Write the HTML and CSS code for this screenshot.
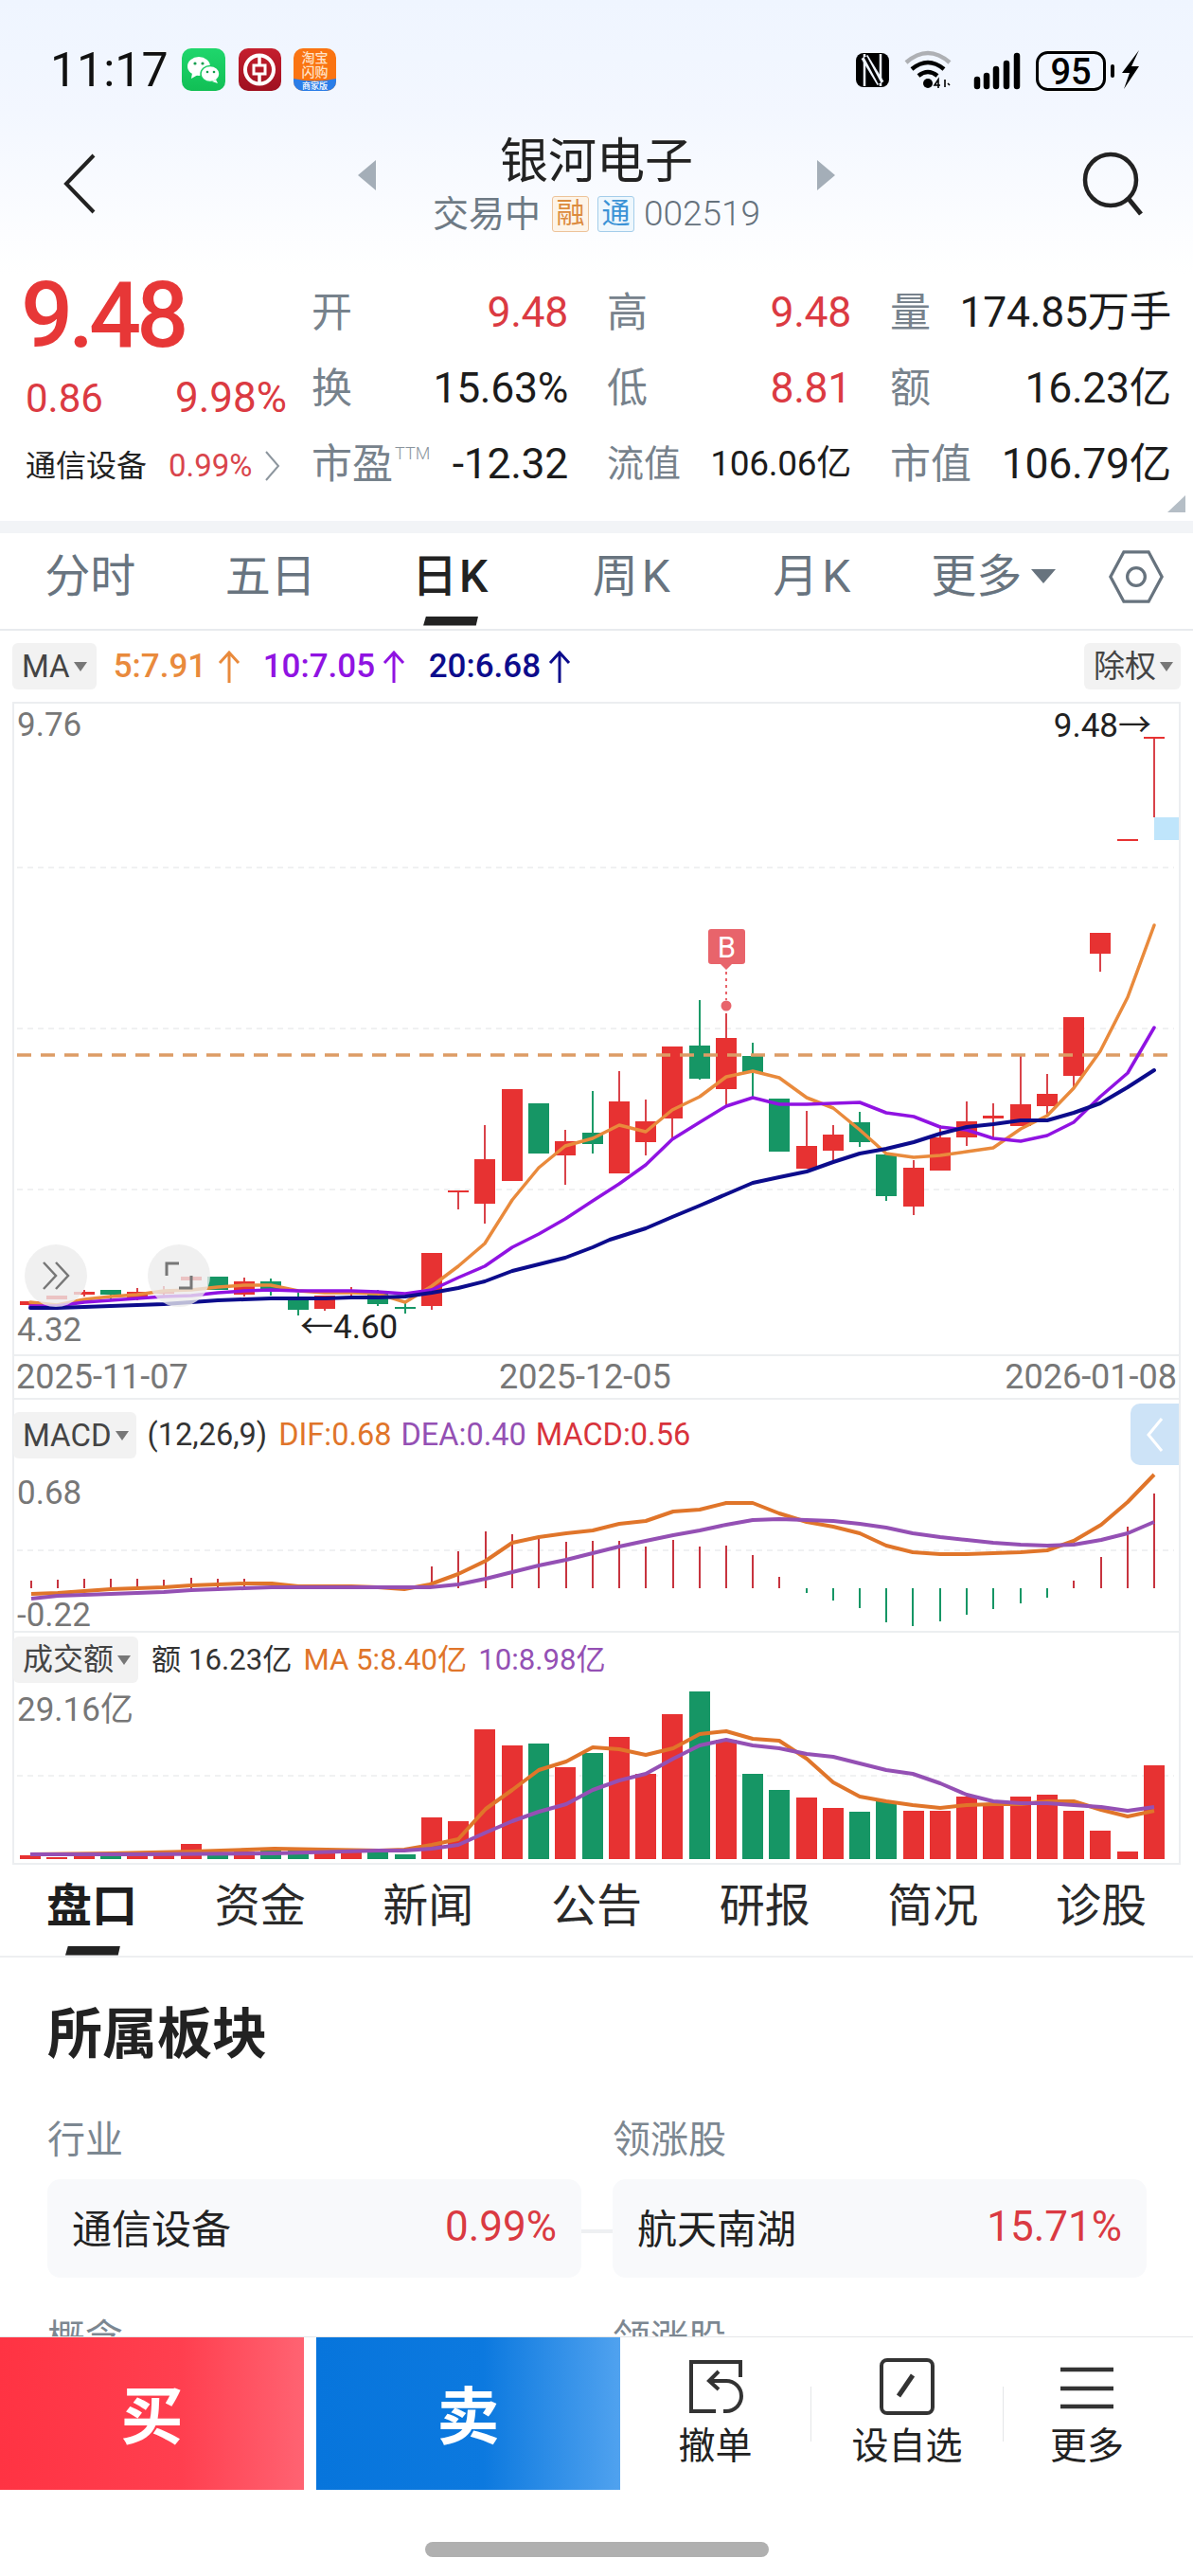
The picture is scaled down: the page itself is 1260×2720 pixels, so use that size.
FILE: index.html
```html
<!DOCTYPE html>
<html lang="zh">
<head>
<meta charset="utf-8">
<title>银河电子</title>
<link rel="stylesheet" href="styles.css">
</head>
<body>
<div class="page">
  <header class="status">
    <div class="status-left">
      <span class="time">11:17</span>
      <svg class="app-icons" viewBox="192 50 164 47" width="164" height="47">
        <defs>
          <linearGradient id="wx" x1="0" y1="0" x2="0" y2="1"><stop offset="0" stop-color="#1fd66c"/><stop offset="1" stop-color="#11bf55"/></linearGradient>
          <linearGradient id="bk" x1="0" y1="0" x2="0" y2="1"><stop offset="0" stop-color="#c51f2e"/><stop offset="1" stop-color="#9f1020"/></linearGradient>
        </defs>
        <rect x="192" y="51" width="46" height="45" rx="10" fill="url(#wx)"/>
        <ellipse cx="210" cy="70" rx="12" ry="10" fill="#fff"/>
        <path d="M203 77l-1 6 7-4z" fill="#fff"/>
        <ellipse cx="222" cy="78" rx="10" ry="8.500" fill="#fff" stroke="#17cb60" stroke-width="1.500"/>
        <path d="M228 84l2 4-6-2z" fill="#fff"/>
        <circle cx="206" cy="67" r="1.600" fill="#17a050"/><circle cx="214" cy="67" r="1.600" fill="#17a050"/>
        <circle cx="219" cy="76" r="1.300" fill="#17a050"/><circle cx="226" cy="76" r="1.300" fill="#17a050"/>
        <rect x="252" y="51" width="45" height="45" rx="10" fill="url(#bk)"/>
        <circle cx="274" cy="73.500" r="15" fill="none" stroke="#fff" stroke-width="4"/>
        <rect x="268" y="69" width="12" height="9" fill="none" stroke="#fff" stroke-width="3"/>
        <path d="M274 59v10M274 78v10" stroke="#fff" stroke-width="3.500"/>
        <rect x="310" y="51" width="45" height="45" rx="10" fill="#fa7412"/>
        <path d="M310 83q22 5 45 0v3a10 10 0 0 1-10 10h-25a10 10 0 0 1-10-10z" fill="#2a7de8"/>
        <text x="332.500" y="66" class="ti-text">淘宝</text>
        <text x="332.500" y="81" class="ti-text">闪购</text>
        <text x="332.500" y="94" class="ti-small">商家版</text>
      </svg>
    </div>
    <svg class="status-right" viewBox="905 52 302 44" width="302" height="44">
      <rect x="906" y="56" width="35" height="36" rx="8" fill="#000"/>
      <path d="M915 57v34M932 57v34" stroke="#eff5ff" stroke-width="2.500"/>
      <path d="M915 60l17 28" stroke="#eff5ff" stroke-width="8"/>
      <path d="M916 60l15 28" stroke="#000" stroke-width="3"/>
      <path d="M959 66q23-20 46 0" fill="none" stroke="#aeb0b4" stroke-width="4.500"/>
      <path d="M965 73q17-14 34 0" fill="none" stroke="#000" stroke-width="4.500"/>
      <path d="M972 80q10-8 20 0" fill="none" stroke="#000" stroke-width="4.500"/>
      <circle cx="982" cy="88" r="5" fill="#000"/>
      <path d="M993 93v-9l-4 6h6M1000 84v8M1003 88l2 2" fill="none" stroke="#000" stroke-width="1.600"/>
      <g class="signal">
        <path d="M1034 91v-7M1044 91v-11M1054 91v-18M1065 91v-24M1076 91v-32"/>
      </g>
      <rect x="1097.500" y="55.500" width="71" height="39" rx="11" fill="none" stroke="#000" stroke-width="3"/>
      <text x="1133" y="88.500" class="bat-text">95</text>
      <rect x="1175" y="68" width="4" height="14" rx="2" fill="#000"/>
      <path d="M1205 53l-18 24h8l-6 17 16-24h-8z" fill="#000"/>
    </svg>
  </header>

  <section class="head">
    <svg class="back" viewBox="0 0 40 66" width="40" height="66"><path d="M34 3L5 33l29 30" fill="none" stroke="#222" stroke-width="4"/></svg>
    <div class="head-center">
      <div class="title-row">
        <i class="tri tri-l"></i>
        <h1 class="title">银河电子</h1>
        <i class="tri tri-r"></i>
      </div>
      <div class="sub-row">
        <span class="sub-text">交易中</span>
        <span class="tag tag-o">融</span>
        <span class="tag tag-b">通</span>
        <span class="code">002519</span>
      </div>
    </div>
    <svg class="search" viewBox="0 0 66 68" width="66" height="68"><circle cx="31" cy="30" r="27" fill="none" stroke="#222" stroke-width="4.500"/><path d="M50 50l13 16" stroke="#222" stroke-width="5"/></svg>
  </section>

  <section class="quote">
    <div class="q-left">
      <div class="price">9.48</div>
      <div class="chg"><span>0.86</span><span class="chg-pct">9.98%</span></div>
      <div class="sector"><span class="sector-name">通信设备</span><span class="sector-pct">0.99%</span>
        <svg class="sector-arrow" viewBox="0 0 18 34" width="18" height="34"><path d="M2 2l13 15L2 32" fill="none" stroke="#8d969e" stroke-width="2"/></svg>
      </div>
    </div>
    <div class="q-grid">
      <div class="cell"><span class="lb">开</span><span class="val red">9.48</span></div>
      <div class="cell"><span class="lb">高</span><span class="val red">9.48</span></div>
      <div class="cell"><span class="lb">量</span><span class="val">174.85万手</span></div>
      <div class="cell"><span class="lb">换</span><span class="val">15.63%</span></div>
      <div class="cell"><span class="lb">低</span><span class="val red">8.81</span></div>
      <div class="cell"><span class="lb">额</span><span class="val">16.23亿</span></div>
      <div class="cell"><span class="lb">市盈<sup class="ttm">TTM</sup></span><span class="val">-12.32</span></div>
      <div class="cell"><span class="lb lb-s">流值</span><span class="val val-s">106.06亿</span></div>
      <div class="cell"><span class="lb">市值</span><span class="val">106.79亿</span></div>
    </div>
    <i class="corner"></i>
  </section>

  <nav class="tabs">
    <span class="tab">分时</span>
    <span class="tab">五日</span>
    <span class="tab tab-on">日K</span>
    <span class="tab tab-k">周K</span>
    <span class="tab tab-k">月K</span>
    <span class="tab tab-more">更多<i class="tab-caret"></i></span>
    <svg class="hex" viewBox="0 0 62 62" width="58" height="58"><path d="M2 31L17 3h28l15 28-15 28H17z" fill="none" stroke="#67737e" stroke-width="3.500"/><circle cx="31" cy="31" r="10" fill="none" stroke="#67737e" stroke-width="3.500"/></svg>
  </nav>

  <div class="ma-row">
    <span class="chip">MA<i class="caret"></i></span>
    <span class="ma-v c-5">5:7.91<svg class="arr" viewBox="0 0 24 34" width="24" height="34"><path d="M12 34V2M2 13L12 2l10 11" fill="none" stroke="currentColor" stroke-width="3"/></svg></span>
    <span class="ma-v c-10">10:7.05<svg class="arr arr-t" viewBox="0 0 24 34" width="24" height="34"><path d="M12 34V2M2 13L12 2l10 11" fill="none" stroke="currentColor" stroke-width="3"/></svg></span>
    <span class="ma-v c-20">20:6.68<svg class="arr arr-t" viewBox="0 0 24 34" width="24" height="34"><path d="M12 34V2M2 13L12 2l10 11" fill="none" stroke="currentColor" stroke-width="3"/></svg></span>
    <span class="chip chip-r">除权<i class="caret"></i></span>
  </div>

  <div class="charts">
    <div class="panel panel-main">
      <svg class="plot" viewBox="15 743 1230 687" width="1230" height="687">
        <path class="grid" d="M18 916H1240M18 1086H1240M18 1256H1240"/>
        <rect x="1219" y="863" width="26" height="24" fill="#bfe5fb"/>
        <path class="wick-r" d="M89 1362V1369M145 1360V1373M173 1358V1368M202 1348V1360M258 1349V1369M343 1382V1384M371 1359V1368M456 1379V1383M484 1258V1277M512 1188V1292M597 1193V1251M654 1131V1163M682 1161V1220M710 1181V1202M767 1070V1168M852 1173V1210M880 1188V1225M965 1225V1283M993 1188V1201M1021 1163V1210M1049 1165V1202M1078 1115V1166M1106 1134V1177M1134 1136V1148M1162 1007V1026M1219 779V863"/>
        <path class="wick-g" d="M117 1367V1373M286 1350V1368M315 1365V1389M399 1362V1379M428 1375V1387M626 1152V1218M739 1056V1140M795 1101V1158M908 1174V1211M936 1263V1268"/>
        <path class="fill-r" d="M21 1374h22v4h-22zM49 1368h22v4h-22zM78 1364h22v3h-22zM134 1364h22v7h-22zM162 1364h22v2h-22zM191 1348h22v4h-22zM247 1353h22v14h-22zM332 1368h22v14h-22zM360 1364h22v2h-22zM445 1323h22v56h-22zM473 1257h22v2h-22zM501 1224h22v47h-22zM530 1150h22v97h-22zM586 1205h22v15h-22zM643 1163h22v76h-22zM671 1184h22v22h-22zM699 1105h22v76h-22zM756 1096h22v54h-22zM841 1210h22v24h-22zM869 1198h22v17h-22zM954 1233h22v41h-22zM982 1201h22v35h-22zM1010 1184h22v17h-22zM1038 1178h22v3h-22zM1067 1166h22v23h-22zM1095 1155h22v13h-22zM1123 1074h22v62h-22zM1151 985h22v22h-22zM1180 886h22v2h-22zM1208 778h22v2h-22z"/>
        <path class="fill-g" d="M106 1362h22v5h-22zM219 1348h22v14h-22zM275 1353h22v9h-22zM304 1369h22v14h-22zM388 1364h22v13h-22zM417 1380h22v2h-22zM558 1165h22v53h-22zM615 1196h22v12h-22zM728 1104h22v35h-22zM784 1115h22v18h-22zM812 1160h22v56h-22zM897 1185h22v21h-22zM925 1219h22v44h-22z"/>
        <path class="dash" d="M18 1114H1242"/>
        <polyline class="ln l5" points="32,1375 60,1378 89,1372 117,1369 145,1367 173,1363 202,1362 230,1359 258,1357 286,1357 315,1363 343,1365 371,1365 399,1366 428,1375 456,1358 484,1337 512,1313 541,1267 569,1233 597,1210 626,1202 654,1188 682,1195 710,1172 739,1158 767,1137 795,1131 823,1138 852,1159 880,1170 908,1193 936,1218 965,1222 993,1220 1021,1216 1049,1212 1078,1192 1106,1178 1134,1149 1162,1110 1191,1053 1219,977"/>
        <polyline class="ln l10" points="32,1379 60,1379 89,1375 117,1373 145,1371 173,1369 202,1368 230,1365 258,1363 286,1362 315,1363 343,1363 371,1363 399,1364 428,1366 456,1362 484,1349 512,1337 541,1317 569,1303 597,1287 626,1268 654,1250 682,1230 710,1203 739,1185 767,1168 795,1159 823,1166 852,1166 880,1165 908,1164 936,1175 965,1179 993,1190 1021,1193 1049,1202 1078,1205 1106,1199 1134,1185 1162,1158 1191,1133 1219,1085"/>
        <polyline class="ln l20" points="32,1381 60,1381 89,1380 117,1379 145,1378 173,1377 202,1375 230,1373 258,1372 286,1371 315,1371 343,1371 371,1370 399,1370 428,1369 456,1365 484,1360 512,1353 541,1342 569,1335 597,1328 626,1317 644,1309 682,1297 710,1285 739,1273 767,1261 795,1249 823,1243 852,1237 880,1227 908,1218 936,1213 965,1206 993,1197 1021,1190 1049,1187 1078,1183 1106,1183 1134,1175 1162,1165 1191,1148 1219,1130"/>
        <path d="M748 984a3 3 0 0 1 3-3h33a3 3 0 0 1 3 3v31a3 3 0 0 1-3 3h-11l-6 6-6-6h-10a3 3 0 0 1-3-3z" fill="#e8646b"/>
        <text x="767.500" y="1011" class="b-text">B</text>
        <path d="M767 1026V1056" stroke="#e8646b" stroke-width="2" stroke-dasharray="3 4"/>
        <circle cx="767" cy="1062" r="5.500" fill="#e8646b"/>
      </svg>
      <span class="axis ax-top">9.76</span>
      <span class="axis ax-bot">4.32</span>
      <span class="mark mark-hi">9.48→</span>
      <span class="mark mark-lo">←4.60</span>
      <span class="float-btn fb-1"><svg viewBox="0 0 30 32" width="30" height="32"><path d="M2 2l13 14L2 30M15 2l13 14-13 14" fill="none" stroke="#777" stroke-width="2.500"/></svg></span>
      <span class="float-btn fb-2"><svg viewBox="0 0 30 30" width="30" height="30"><path d="M2 15V2h13M28 15v13H15" fill="none" stroke="#777" stroke-width="3"/></svg></span>
    </div>
    <div class="dates"><span>2025-11-07</span><span class="date-mid">2025-12-05</span><span>2026-01-08</span></div>
    <div class="panel panel-macd">
      <svg class="plot" viewBox="15 1478 1230 244" width="1230" height="244">
        <path class="grid" d="M18 1637H1240"/>
        <path class="hist-r" d="M33 1669V1677M61 1668V1677M89 1667V1677M117 1667V1677M145 1667V1677M173 1668V1677M202 1666V1677M230 1667V1677M258 1667V1677M287 1671V1677M456 1654V1677M484 1638V1677M513 1617V1677M541 1620V1677M569 1623V1677M598 1628V1677M626 1627V1677M654 1627V1677M682 1633V1677M711 1626V1677M739 1633V1677M767 1632V1677M795 1642V1677M823 1665V1677M1134 1669V1677M1163 1644V1677M1191 1612V1677M1219 1577V1677"/>
        <path class="hist-g" d="M852 1677V1682M880 1677V1690M908 1677V1698M936 1677V1713M964 1677V1717M993 1677V1712M1021 1677V1705M1049 1677V1699M1078 1677V1693M1106 1677V1687"/>
        <polyline class="ln2 dif" points="33,1683 61,1682 89,1680 117,1678 145,1677 173,1676 202,1674 230,1673 258,1672 287,1672 315,1675 343,1675 371,1675 399,1676 427,1678 454,1673 484,1662 513,1648 541,1629 569,1623 598,1619 626,1616 654,1609 682,1606 711,1596 739,1594 767,1587 795,1587 823,1598 852,1607 880,1612 908,1619 936,1632 964,1639 993,1641 1021,1641 1049,1640 1078,1639 1106,1637 1134,1627 1163,1610 1191,1586 1219,1557"/>
        <polyline class="ln2 dea" points="33,1688 61,1685 89,1684 117,1683 145,1682 173,1681 202,1679 230,1678 258,1677 287,1676 315,1676 343,1676 371,1676 399,1676 427,1676 454,1676 484,1673 513,1667 541,1660 569,1653 598,1647 626,1640 654,1633 682,1627 711,1621 739,1616 767,1610 795,1605 823,1604 852,1605 880,1606 908,1609 936,1613 964,1619 993,1623 1021,1626 1049,1629 1078,1631 1106,1632 1134,1631 1163,1626 1191,1619 1219,1607"/>
      </svg>
      <div class="legend">
        <span class="chip">MACD<i class="caret"></i></span>
        <span class="lg-dark">(12,26,9)</span>
        <span class="lg-o">DIF:0.68</span>
        <span class="lg-p">DEA:0.40</span>
        <span class="lg-r">MACD:0.56</span>
      </div>
      <span class="axis ax-m1">0.68</span>
      <span class="axis ax-m2">-0.22</span>
      <span class="side-tab"><svg viewBox="0 0 20 38" width="20" height="38"><path d="M17 2L3 19l14 17" fill="none" stroke="#fff" stroke-width="3"/></svg></span>
    </div>
    <div class="panel panel-vol">
      <svg class="plot" viewBox="15 1724 1230 243" width="1230" height="243">
        <path class="grid" d="M18 1875H1240"/>
        <path class="fill-r" d="M21 1959h22V1963h-22zM49 1961h22V1963h-22zM78 1957h22V1963h-22zM134 1957h22V1963h-22zM162 1957h22V1963h-22zM191 1947h22V1963h-22zM247 1955h22V1963h-22zM332 1953h22V1963h-22zM360 1955h22V1963h-22zM445 1919h22V1963h-22zM473 1923h22V1963h-22zM501 1826h22V1963h-22zM530 1843h22V1963h-22zM586 1866h22V1963h-22zM643 1834h22V1963h-22zM671 1873h22V1963h-22zM699 1810h22V1963h-22zM756 1837h22V1963h-22zM841 1898h22V1963h-22zM869 1909h22V1963h-22zM954 1912h22V1963h-22zM982 1912h22V1963h-22zM1010 1897h22V1963h-22zM1038 1907h22V1963h-22zM1067 1897h22V1963h-22zM1095 1895h22V1963h-22zM1123 1912h22V1963h-22zM1151 1933h22V1963h-22zM1180 1955h22V1963h-22zM1208 1864h22V1963h-22z"/>
        <path class="fill-g" d="M106 1958h22V1963h-22zM219 1957h22V1963h-22zM275 1954h22V1963h-22zM304 1954h22V1963h-22zM388 1955h22V1963h-22zM417 1958h22V1963h-22zM558 1841h22V1963h-22zM615 1851h22V1963h-22zM728 1786h22V1963h-22zM784 1873h22V1963h-22zM812 1890h22V1963h-22zM897 1913h22V1963h-22zM925 1902h22V1963h-22z"/>
        <polyline class="ln2 dif" points="32,1958 117,1957 202,1955 290,1952 400,1954 427,1953 456,1948 484,1942 513,1910 541,1890 569,1869 598,1860 626,1845 654,1847 682,1853 711,1846 739,1831 767,1828 795,1836 823,1838 852,1857 880,1882 908,1897 936,1902 964,1906 993,1909 1021,1906 1049,1905 1078,1905 1106,1902 1134,1902 1163,1911 1191,1918 1219,1912"/>
        <polyline class="ln2 dea" points="32,1958 145,1958 290,1957 399,1954 427,1954 456,1952 484,1948 513,1935 541,1923 569,1913 598,1905 626,1890 654,1880 682,1873 711,1857 739,1843 767,1837 795,1843 823,1846 852,1852 880,1855 908,1862 936,1869 964,1873 993,1883 1021,1895 1049,1902 1078,1904 1106,1904 1134,1906 1163,1908 1191,1912 1219,1908"/>
      </svg>
      <div class="legend legend-vol">
        <span class="chip">成交额<i class="caret"></i></span>
        <span class="lg-dark">额 16.23亿</span>
        <span class="lg-o">MA 5:8.40亿</span>
        <span class="lg-p">10:8.98亿</span>
      </div>
      <span class="axis ax-v">29.16亿</span>
    </div>
  </div>

  <nav class="subtabs">
    <span class="subtab subtab-on">盘口</span>
    <span class="subtab">资金</span>
    <span class="subtab">新闻</span>
    <span class="subtab">公告</span>
    <span class="subtab">研报</span>
    <span class="subtab">简况</span>
    <span class="subtab">诊股</span>
  </nav>

  <main class="main">
    <h2 class="sec-title">所属板块</h2>
    <div class="sec-row">
      <div class="sec-col"><div class="sec-label">行业</div><div class="card"><span>通信设备</span><span class="pct">0.99%</span></div></div>
      <i class="bridge"></i>
      <div class="sec-col"><div class="sec-label">领涨股</div><div class="card"><span>航天南湖</span><span class="pct">15.71%</span></div></div>
    </div>
    <div class="sec-row sec-next">
      <div class="sec-col"><div class="sec-label">概念</div></div>
      <i class="bridge bridge-none"></i>
      <div class="sec-col"><div class="sec-label">领涨股</div></div>
    </div>
  </main>

  <footer class="footer">
    <div class="foot-row">
      <button class="trade buy">买</button>
      <button class="trade sell">卖</button>
      <div class="tool tool-1">
        <svg viewBox="0 0 60 60" width="60" height="60"><path d="M56 20V4H4v52h26" fill="none" stroke="#333" stroke-width="4"/><path d="M33 14L23 24l10 9" fill="none" stroke="#333" stroke-width="4"/><path d="M24 24h17a15.500 15.500 0 0 1 0 32h-3" fill="none" stroke="#333" stroke-width="4"/></svg>
        <span>撤单</span>
      </div>
      <i class="tool-sep"></i>
      <div class="tool tool-2">
        <svg viewBox="0 0 60 60" width="60" height="60"><rect x="3" y="2" width="54" height="56" rx="6" fill="none" stroke="#333" stroke-width="4"/><path d="M21 40l15-22" fill="none" stroke="#333" stroke-width="5"/></svg>
        <span>设自选</span>
      </div>
      <i class="tool-sep"></i>
      <div class="tool tool-3">
        <svg viewBox="0 0 60 60" width="60" height="60"><path d="M2 12h56M2 32h56M2 51h56" stroke="#333" stroke-width="4.500"/></svg>
        <span>更多</span>
      </div>
    </div>
    <i class="home-bar"></i>
  </footer>
</div>
</body>
</html>
```
FILE: styles.css
```css
* { box-sizing: border-box; }
html, body { margin: 0; padding: 0; }
body {
  width: 1260px;
  height: 2720px;
  overflow: hidden;
  background: #fff;
  font-family: Roboto, "Noto Sans CJK SC", sans-serif;
  color: #222;
}
i { font-style: normal; display: block; }
.page {
  width: 1260px;
  height: 2720px;
  background: linear-gradient(#eff5ff 0, #f3f7ff 120px, #fff 290px) no-repeat;
  background-size: 100% 300px;
}

/* status bar */
.status {
  height: 112px;
  padding: 35px 55px 0 53px;
  display: flex;
  align-items: center;
  justify-content: space-between;
}
.status-left { display: flex; align-items: center; gap: 11px; }
.time { font-size: 50px; font-weight: 400; color: #111; width: 128px; line-height: 50px; }
.app-icons, .status-right { display: block; }
.ti-text { font: 500 14px "Noto Sans CJK SC", sans-serif; fill: #ffe3c8; text-anchor: middle; }
.ti-small { font: 500 9px "Noto Sans CJK SC", sans-serif; fill: #fff; text-anchor: middle; }
.signal path { stroke: #000; stroke-width: 6.500; stroke-linecap: round; fill: none; }
.bat-text { font: 500 38px Roboto, sans-serif; fill: #000; text-anchor: middle; }

/* header */
.head {
  height: 150px;
  padding: 0 52px;
  display: grid;
  grid-template-columns: 1fr auto 1fr;
  align-items: start;
}
.back { margin: 49px 0 0 13px; display: block; }
.search { margin-top: 48px; justify-self: end; display: block; }
.head-center { padding-top: 28px; display: flex; flex-direction: column; align-items: center; }
.title-row { display: flex; align-items: flex-start; gap: 131px; height: 66px; }
.title { margin: 0; font-size: 51px; font-weight: 400; line-height: 62px; color: #222; width: 204px; text-align: center; white-space: nowrap; }
.tri { width: 0; height: 0; margin-top: 29px; border-top: 16px solid transparent; border-bottom: 16px solid transparent; }
.tri-l { border-right: 19px solid #a4aeb8; }
.tri-r { border-left: 19px solid #a4aeb8; }
.sub-row { display: flex; align-items: center; height: 40px; }
.sub-text { font-size: 38px; line-height: 40px; color: #6e7a85; width: 114px; }
.tag { width: 39px; height: 38px; margin-left: 12px; border: 1.500px solid; border-radius: 3px; font-size: 30px; line-height: 34px; text-align: center; display: block; }
.tag + .tag { margin-left: 9px; }
.tag-o { color: #dc8b3e; border-color: #edc39a; background: #fdf4e8; }
.tag-b { color: #3b93d6; border-color: #a4cdea; background: #eef7fd; }
.code { margin-left: 10px; font-size: 37px; font-weight: 300; line-height: 40px; color: #66727d; }

/* quote */
.quote { position: relative; height: 288px; padding: 28px 0 19px 27px; display: flex; }
.q-left { width: 276px; margin-right: 27px; }
.price { font-size: 97px; font-weight: 500; color: #e73737; line-height: 86px; height: 86px; letter-spacing: -5px; margin-left: -5px; }
.chg { margin-top: 14px; display: flex; justify-content: space-between; align-items: baseline; font-size: 42px; line-height: 60px; color: #db3a42; font-weight: 400; white-space: nowrap; }
.chg-pct { font-size: 44px; }
.sector { margin-top: 11px; display: flex; align-items: center; line-height: 60px; height: 60px; white-space: nowrap; }
.sector-name { font-size: 32px; color: #222; width: 151px; }
.sector-pct { font-size: 33px; color: #d9454c; width: 101px; font-weight: 400; }
.sector-arrow { display: block; }
.q-grid { display: grid; grid-template-columns: 270px 257px 296px; grid-auto-rows: 80px; column-gap: 42px; }
.cell { display: flex; justify-content: space-between; align-items: center; white-space: nowrap; }
.lb { font-size: 43px; color: #77828c; font-weight: 400; line-height: 60px; margin-left: -1px; }
.lb-s { font-size: 39px; }
.val { font-size: 44.500px; font-weight: 400; color: #1c1c1c; line-height: 60px; letter-spacing: -.3px; }
.val-s { font-size: 37px; }
.red { color: #db3a42; }
.ttm { font-size: 18px; font-weight: 300; color: #8a949d; vertical-align: 20px; line-height: 0; margin-left: 2px; }
.corner { position: absolute; right: 8px; top: 261px; width: 0; height: 0; border-left: 19px solid transparent; border-bottom: 18px solid #b5bec6; }

/* tabs */
.tabs {
  margin-top: 13px;
  height: 103px;
  padding-bottom: 10px;
  display: grid;
  grid-template-columns: repeat(6, 190.500px) 117px;
  align-items: center;
  justify-items: center;
  border-bottom: 2px solid #e8ebee;
  background: #fff;
  position: relative;
  box-shadow: 0 -13px 0 #f2f4f7;
}
.tab { font-size: 48px; color: #68747f; position: relative; line-height: 60px; display: flex; align-items: center; white-space: nowrap; font-weight: 400; }
.tab-on { color: #222; font-weight: 500; letter-spacing: 2px; }
.tab-on::after { content: ""; position: absolute; left: 12px; top: 72px; width: 58px; height: 10px; background: #222; clip-path: polygon(5% 0, 100% 0, 96% 100%, 0 100%); }
.tab-k { letter-spacing: 4px; margin-left: 4px; }
.tab-more { margin-left: 3px; }
.tab-caret { margin-left: 10px; width: 0; height: 0; border-left: 13px solid transparent; border-right: 13px solid transparent; border-top: 15px solid #67737e; }
.hex { display: block; margin-left: -4px; }

/* MA row */
.ma-row { height: 75px; padding: 13px 13px 0; display: flex; align-items: flex-start; background: #fff; }
.chip { height: 49px; padding: 0 10px; border-radius: 6px; background: #f2f2f2; font-size: 33px; color: #444; line-height: 49px; display: flex; align-items: center; white-space: nowrap; font-weight: 400; }
.caret { margin-left: 4px; width: 0; height: 0; border-left: 7px solid transparent; border-right: 7px solid transparent; border-top: 10px solid #777; }
.chip-r { margin-left: auto; padding-right: 8px; }
.ma-v { font-size: 35px; font-weight: 500; line-height: 49px; white-space: nowrap; display: flex; align-items: center; }
.ma-v.c-5 { margin-left: 18px; width: 158px; color: #e98a3c; }
.ma-v.c-10 { width: 175px; color: #9013e2; }
.ma-v.c-20 { color: #0c0c8c; }
.arr { display: block; margin-left: 12px; }
.arr-t { margin-left: 8px; }

/* charts */
.charts { margin: 0 13px; border-left: 2px solid #eceef0; border-right: 2px solid #eceef0; }
.panel { position: relative; border-top: 2px solid #eceef0; }
.panel-main { height: 689px; }
.panel-macd { height: 246px; }
.panel-vol { height: 247px; border-bottom: 2px solid #eceef0; }
.plot { position: absolute; left: 0; top: 0; display: block; }
.grid { stroke: #f0f1f2; stroke-width: 2; stroke-dasharray: 6 5; fill: none; }
.dash { stroke: #dd9c65; stroke-width: 3.500; stroke-dasharray: 15 10; fill: none; }
.wick-r { stroke: #d9434a; stroke-width: 2; fill: none; }
.wick-g { stroke: #1c9a68; stroke-width: 2; fill: none; }
.fill-r { fill: #e73232; }
.fill-g { fill: #169665; }
.hist-r { stroke: #c7343f; stroke-width: 2; fill: none; }
.hist-g { stroke: #169665; stroke-width: 2; fill: none; }
.ln { fill: none; stroke-linejoin: round; stroke-linecap: round; stroke-width: 3.500; }
.l5 { stroke: #e98a3c; }
.l10 { stroke: #9013e2; }
.l20 { stroke: #0c0c8c; stroke-width: 4; }
.ln2 { fill: none; stroke-linejoin: round; stroke-width: 4; }
.dif { stroke: #e0752a; }
.dea { stroke: #9450b4; }
.b-text { font: 400 31px Roboto, sans-serif; fill: #fff; text-anchor: middle; }
.axis { position: absolute; left: 3px; font-size: 35px; font-weight: 400; color: #777; line-height: 36px; white-space: nowrap; }
.ax-top { top: 5px; }
.ax-bot { top: 644px; }
.ax-m1 { top: 81px; }
.ax-m2 { top: 210px; }
.ax-v { top: 64px; }
.mark { position: absolute; font-size: 35px; color: #222; line-height: 36px; white-space: nowrap; }
.mark-hi { right: 29px; top: 6px; }
.mark-lo { left: 302px; top: 641px; }
.float-btn { position: absolute; top: 571px; width: 66px; height: 66px; border-radius: 50%; background: rgba(236, 236, 236, .78); display: flex; align-items: center; justify-content: center; }
.fb-1 { left: 11px; }
.fb-2 { left: 141px; }
.float-btn svg { display: block; }
.dates { position: relative; height: 46px; padding: 0 2px 0 2px; display: flex; justify-content: space-between; align-items: center; border-top: 2px solid #eceef0; font-size: 36px; font-weight: 400; color: #777; white-space: nowrap; line-height: 44px; }
.date-mid { position: absolute; left: 512px; top: 0; }
.legend { position: relative; padding-top: 13px; display: flex; font-size: 32.500px; line-height: 49px; white-space: nowrap; }
.legend > .chip { margin-left: -1px; padding: 0 8px 0 10px; }
.legend .lg-dark { margin-left: 12px; color: #333; }
.legend .lg-o { margin-left: 12px; color: #e0752a; }
.legend .lg-p { margin-left: 10px; color: #9450b4; }
.legend .lg-r { margin-left: 10px; color: #d8333c; }
.legend-vol { padding-top: 4px; font-size: 31.200px; }
.legend-vol > .chip { font-size: 32px; }
.legend-vol .lg-dark { margin-left: 14px; }
.legend-vol .lg-p { margin-left: 12px; }
.side-tab { position: absolute; right: 0; top: 4px; width: 51px; height: 65px; background: #cde3f7; border-radius: 10px 0 0 10px; display: flex; align-items: center; justify-content: center; }
.side-tab svg { display: block; }

/* sub tabs */
.subtabs { height: 98px; padding: 0 49px 9px; display: flex; justify-content: space-between; align-items: center; border-bottom: 2px solid #eeeff1; }
.subtab { position: relative; font-size: 48px; line-height: 60px; color: #2a2a2a; width: 96px; white-space: nowrap; }
.subtab-on { font-weight: 700; color: #1e1e1e; }
.subtab-on::after { content: ""; position: absolute; left: 20px; top: 72px; width: 58px; height: 10px; background: #222; clip-path: polygon(5% 0, 100% 0, 96% 100%, 0 100%); }

/* main */
.main { height: 400px; overflow: hidden; padding: 0 49px 0 50px; background: #fff; }
.sec-title { margin: 46px 0 0; font-size: 58px; font-weight: 700; line-height: 70px; color: #222; white-space: nowrap; }
.sec-row { display: flex; align-items: flex-start; margin-top: 52px; }
.sec-col { width: 564px; }
.sec-label { font-size: 40px; color: #7c8791; line-height: 50px; font-weight: 400; white-space: nowrap; }
.card { margin-top: 16px; height: 104px; padding: 0 26px 5px; border-radius: 14px; background: #f8f9fb; display: flex; justify-content: space-between; align-items: center; font-size: 42px; color: #222; }
.pct { color: #da3a42; font-size: 44px; }
.bridge { width: 33px; height: 4px; margin-top: 119px; background: #eef0f2; flex: none; }
.bridge-none { background: transparent; }
.sec-next { margin-top: 40px; }

/* footer */
.footer { position: relative; height: 253px; border-top: 1px solid #e4e6e8; background: #fff; display: flex; flex-direction: column; }
.foot-row { display: flex; height: 161px; }
.trade { width: 321px; height: 161px; border: 0; padding: 0 0 6px; font: 700 66px "Noto Sans CJK SC", sans-serif; color: #fff; }
.buy { background: linear-gradient(90deg, #ff3343 0, #ff3f4f 60%, #ff6372 100%); }
.sell { margin-left: 13px; background: linear-gradient(90deg, #0775dc 0, #0c79df 55%, #50a2ef 100%); }
.tool { height: 161px; padding-top: 22px; display: flex; flex-direction: column; align-items: center; font-size: 39px; line-height: 46px; color: #222; white-space: nowrap; }
.tool svg { display: block; margin-bottom: 10px; }
.tool-1 { width: 201px; }
.tool-2 { width: 202px; }
.tool-3 { width: 176px; }
.tool-sep { width: 1px; height: 58px; margin-top: 52px; background: #e4e6e8; }
.home-bar { width: 363px; height: 16px; margin: 55px auto 0; border-radius: 8px; background: #b0b0b0; }
```
